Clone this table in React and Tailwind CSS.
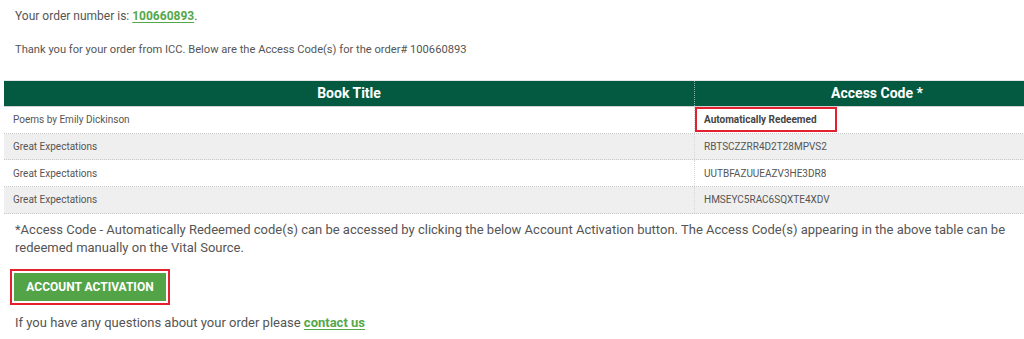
export default function App() {
  const rows = [
    ["Poems by Emily Dickinson", "Automatically Redeemed", true],
    ["Great Expectations", "RBTSCZZRR4D2T28MPVS2", false],
    ["Great Expectations", "UUTBFAZUUEAZV3HE3DR8", false],
    ["Great Expectations", "HMSEYC5RAC6SQXTE4XDV", false],
  ];
  return (
    <div className="w-[1024px] h-[339px] bg-white overflow-hidden text-[#555]" style={{ fontFamily: "Roboto, 'Liberation Sans', sans-serif" }}>
      <div className="pl-[15px] pt-[7px] text-[12px] leading-[18px]">
        Your order number is:{" "}
        <span className="font-bold text-[#55a84a] underline underline-offset-2">100660893</span>.
      </div>
      <div className="pl-[15px] pt-[16px] text-[11.15px] leading-[18px]">
        Thank you for your order from ICC. Below are the Access Code(s) for the order# 100660893
      </div>
      <div className="ml-[4px] mt-[21px] w-[1055px] border-t border-[#e5e5e5]">
        <div className="flex bg-[#045a40] text-white font-bold text-[14px] h-[26px] items-center border-b border-[#d0d0d0]">
          <div className="w-[691px] text-center border-r border-dotted border-[#8aa] h-full flex items-center justify-center">Book Title</div>
          <div className="flex-1 text-center">Access Code *</div>
        </div>
        {rows.map(([t, c, hl], i) => (
          <div key={i} className={`flex h-[26.7px] items-center text-[10px] border-b border-dotted border-[#c8c8c8] ${i % 2 === 1 ? "bg-[#efefef]" : "bg-white"}`}>
            <div className="w-[691px] pl-[9px] h-full flex items-center border-r border-dotted border-[#d8d8d8]">{t}</div>
            <div className="flex-1 h-full flex items-center pl-[9px]">
              {hl ? (
                <span className="-ml-[9px] border-2 border-[#e4202e] pl-[7px] pr-[18px] h-[25px] flex items-center font-bold text-[#444]">{c}</span>
              ) : (
                c
              )}
            </div>
          </div>
        ))}
      </div>
      <div className="pl-[15px] pr-[8px] pt-[7px] text-[13px] leading-[18px] text-[#555]">
        *Access Code - Automatically Redeemed code(s) can be accessed by clicking the below Account Activation button. The Access Code(s) appearing in the above table can be redeemed manually on the Vital Source.
      </div>
      <div className="ml-[10px] mt-[12px] inline-flex border-2 border-[#e4202e] p-[2px]">
        <div className="bg-[#52a447] text-white font-bold text-[12px] w-[152px] h-[28px] flex items-center justify-center">ACCOUNT ACTIVATION</div>
      </div>
      <div className="pl-[15px] pt-[9px] text-[13px] leading-[18px]">
        If you have any questions about your order please{" "}
        <span className="font-bold text-[#55a84a] underline underline-offset-2">contact us</span>
      </div>
    </div>
  );
}
